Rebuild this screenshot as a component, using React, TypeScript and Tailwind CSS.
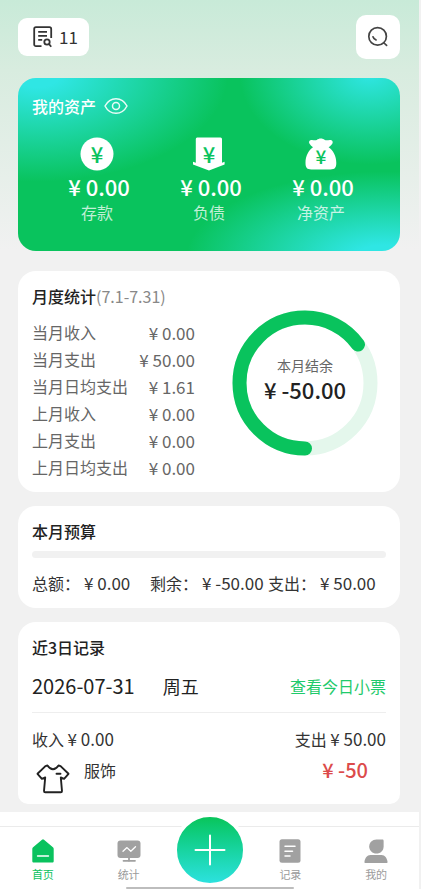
import type { ReactNode } from 'react';

type Stat = { label: string; value: string };

const MONTH_STATS: Stat[] = [
  { label: '当月收入', value: '0.00' },
  { label: '当月支出', value: '50.00' },
  { label: '当月日均支出', value: '1.61' },
  { label: '上月收入', value: '0.00' },
  { label: '上月支出', value: '0.00' },
  { label: '上月日均支出', value: '0.00' },
];

const BUDGET: Stat[] = [
  { label: '总额', value: '0.00' },
  { label: '剩余', value: '-50.00' },
  { label: '支出', value: '50.00' },
];

const BALANCE_RATIO = 0.65;

const yen = (v: string) => `¥ ${v}`;

function ReceiptIcon() {
  return (
    <svg width="20" height="22" viewBox="0 0 20 22" fill="none" stroke="#333" strokeWidth="1.8">
      <path d="M8.5 20.2H3a1.8 1.8 0 0 1-1.8-1.8V3c0-1 .8-1.8 1.8-1.8h13.400c1 0 1.800.8 1.800 1.800v9" />
      <path d="M5.200 5.800h8.800M5.200 9.800h8.800M5.200 13.800h4" />
      <circle cx="14" cy="16" r="2.7" />
      <path d="M16 18l2.200 2.800" />
    </svg>
  );
}

function SearchIcon() {
  return (
    <svg width="22" height="22" viewBox="0 0 22 22" fill="none" stroke="#444" strokeWidth="1.7" strokeLinecap="round">
      <circle cx="10.6" cy="10.4" r="8.8" />
      <path d="M17 17l2.600 2.400" />
      <path d="M6 10.800c.4 1.500 1.400 2.600 3 3.100" />
    </svg>
  );
}

function EyeIcon() {
  return (
    <svg width="24" height="18" viewBox="0 0 24 18" fill="none" stroke="#fff" strokeOpacity="0.9" strokeWidth="1.5">
      <path d="M1 9c2.400-4.600 6.300-7.300 11-7.300S20.600 4.400 23 9c-2.400 4.600-6.300 7.300-11 7.300S3.400 13.600 1 9z" strokeLinejoin="round" />
      <circle cx="12" cy="9" r="3.5" />
    </svg>
  );
}

function YenMark({ y, size }: { y: number; size: number }) {
  return (
    <text x="17" y={y} textAnchor="middle" fontSize={size} fontWeight="500" fill="#09c35d">¥</text>
  );
}

function CoinIcon() {
  return (
    <svg width="34" height="34" viewBox="0 0 34 34">
      <circle cx="17" cy="17" r="16.5" fill="#fff" />
      <YenMark y={25.6} size={22} />
    </svg>
  );
}

function BillIcon() {
  return (
    <svg width="34" height="34" viewBox="0 0 34 34" fill="#fff">
      <path d="M5.500.500h23a1.500 1.500 0 0 1 1.500 1.500v23.800l2.600-1v2.800L17 33.500 1 27.600v-2.800l2.800 1V2A1.500 1.500 0 0 1 5.500.500z" />
      <YenMark y={25.6} size={22} />
    </svg>
  );
}

function BagIcon() {
  return (
    <svg width="34" height="34" viewBox="0 0 34 34" fill="#fff">
      <path d="M12.800 3c2-2 6-2 8 0 1.200.3 3 .2 5 0 2.200-.1 3.600 1.600 2.600 3.400-.8 1.400-2.200 2.700-3.800 3.800 4.600 3 7.700 8.800 7.700 15.600 0 5-1.600 6.700-5.800 6.700H7.300c-4.200 0-5.800-1.700-5.800-6.700 0-6.800 3-12.600 7.500-15.600-1.600-1.100-2.800-2.400-3.600-3.800C4.400 4.600 5.800 2.900 8 3c1.900.2 3.600.3 4.800 0z" />
      <YenMark y={27} size={19} />
    </svg>
  );
}

function ShirtIcon() {
  return (
    <svg width="34" height="30" viewBox="0 0 34 30" fill="none" stroke="#222" strokeWidth="1.9" strokeLinejoin="round" strokeLinecap="round">
      <path d="M11.500 1.500c1.500 2.400 3.200 3.700 5.500 3.700s4-1.300 5.500-3.700c1 .2 1.800.5 2.600 1.100l7.400 7.200-4.400 5-3.300-1.300 1.200 13.500c0 .9-.3 1.300-1.200 1.300H9.200c-.9 0-1.200-.4-1.200-1.300l1.200-13.500-3.300 1.300-4.400-5 7.400-7.200c.8-.6 1.600-.9 2.600-1.100z" />
      <path d="M20.500 9.700h4" />
    </svg>
  );
}

function HomeIcon() {
  return (
    <svg width="24" height="24" viewBox="0 0 24 24">
      <path d="M11 .8a1.500 1.500 0 0 1 2 0l8.900 7.500c.6.500.8 1 .8 1.800V22c0 1-.5 1.500-1.500 1.500H2.800c-1 0-1.500-.5-1.500-1.500V10.100c0-.8.200-1.300.8-1.800L11 .8z" fill="#0ac25e" />
      <path d="M6.500 17h11" stroke="#fff" strokeWidth="1.4" strokeLinecap="round" />
    </svg>
  );
}

function ChartIcon() {
  return (
    <svg width="24" height="24" viewBox="0 0 24 24" fill="none">
      <rect x="0.5" y="1.5" width="23" height="17.5" rx="3" fill="#a1a1a1" />
      <path d="M12 19v3M6.500 21.800h11.500" stroke="#a1a1a1" strokeWidth="1.8" strokeLinecap="round" />
      <path d="M6 12.300l4-3.700 3.800 3.700L18.500 7.800" stroke="#fff" strokeWidth="1.3" strokeLinecap="round" strokeLinejoin="round" />
    </svg>
  );
}

function NoteIcon() {
  return (
    <svg width="24" height="24" viewBox="0 0 24 24">
      <rect x="1.5" y="0.3" width="21" height="23.5" rx="2.5" fill="#a1a1a1" />
      <path d="M7 7.300h10M7 12.200h7.500M7 17h5" stroke="#fff" strokeWidth="1.5" strokeLinecap="round" />
    </svg>
  );
}

function UserIcon() {
  return (
    <svg width="24" height="24" viewBox="0 0 24 24" fill="#a1a1a1">
      <path d="M12.500.500h5.700c1 0 1.400.5 1.400 1.400v5.600c0 4.200-3 7.100-7.200 7.100-4 0-7.200-3-7.200-7.100S8.400.500 12.500.500z" />
      <path d="M6.500 16h11c3.500 0 5.500 3.400 6 6.500.2 1-.2 1.500-1 1.500h-21c-.8 0-1.200-.5-1-1.500.5-3.100 2.500-6.500 6-6.500z" />
    </svg>
  );
}

function Card({ className, children }: { className: string; children: ReactNode }) {
  return <section className={`rounded-[18px] bg-white px-3.5 pt-[13px] ${className}`}>{children}</section>;
}

function Asset({ icon, label }: { icon: ReactNode; label: string }) {
  return (
    <div className="flex flex-col items-center">
      {icon}
      <span className="mt-px pl-1 text-[22px] leading-7 font-medium">{yen('0.00')}</span>
      <span className="text-base leading-6 text-white/75">{label}</span>
    </div>
  );
}

function NavItem({ icon, label, active }: { icon: ReactNode; label: string; active?: boolean }) {
  return (
    <a href="#" className={`flex flex-col items-center pt-3 text-[11px] leading-[22px] ${active ? 'text-[#0ac25e]' : 'text-[#9b9b9b]'}`}>
      {icon}
      {label}
    </a>
  );
}

export default function App() {
  return (
    <div className="min-h-screen bg-[#f1f1f1] pr-0.5 font-['Noto_Sans_CJK_SC',sans-serif] text-[#222]">
      <div className="flex min-h-screen flex-col bg-[#f1f1f1] bg-[linear-gradient(#c8ead8_0px,#d8ecdf_70px,#f1f1f1_250px)]">
        <header className="flex items-center justify-between pt-[15px] pr-[19px] pl-[18px]">
          <button className="flex h-[38px] w-[71px] items-center justify-center gap-1.5 rounded-[9px] bg-white pl-1 text-[17px] text-[#333]">
            <ReceiptIcon />
            11
          </button>
          <button aria-label="搜索" className="flex size-11 items-center justify-center rounded-[10px] bg-white">
            <SearchIcon />
          </button>
        </header>

        <main className="flex flex-col pt-[19px] pr-[19px] pb-[7px] pl-[18px]">
          <section className="rounded-[18px] bg-[#09c35d] bg-[radial-gradient(50%_62%_at_5%_-2%,#2fe6e4_12%,#2fe6e400_100%),radial-gradient(34%_52%_at_92%_-2%,#2fe6e4_0%,#2fe6e400_100%),radial-gradient(52%_50%_at_96%_104%,#2fe6e4_15%,#2fe6e400_100%)] px-3.5 pt-4 pb-[27px] text-white">
            <div className="flex items-center gap-2 text-base leading-6 font-medium">
              我的资产
              <button aria-label="显示金额"><EyeIcon /></button>
            </div>
            <div className="mt-[19px] grid grid-cols-3 px-[9px]">
              <Asset icon={<CoinIcon />} label="存款" />
              <Asset icon={<BillIcon />} label="负债" />
              <Asset icon={<BagIcon />} label="净资产" />
            </div>
          </section>

          <Card className="mt-5 flex items-center justify-between pb-[11px]">
            <div className="w-[163px]">
              <h2 className="text-base leading-6 font-medium whitespace-nowrap">
                月度统计<span className="font-normal text-[#888]">(7.1-7.31)</span>
              </h2>
              <dl className="mt-[11px] text-[#666]">
                {MONTH_STATS.map(s => (
                  <div key={s.label} className="flex justify-between leading-[27px]">
                    <dt className="text-base leading-[27px]">{s.label}</dt>
                    <dd className="text-[17px]">{yen(s.value)}</dd>
                  </div>
                ))}
              </dl>
            </div>
            <div className="mr-2 grid place-items-center">
              <svg className="col-start-1 row-start-1" width="146" height="146" viewBox="0 0 146 146" fill="none" strokeWidth="14">
                <circle cx="73" cy="73" r="65.5" stroke="#e4f7ec" />
                <circle
                  cx="73" cy="73" r="65.5" stroke="#09c35d" strokeLinecap="round"
                  pathLength={1} strokeDasharray={`${BALANCE_RATIO} 1`} transform="rotate(90 73 73)"
                />
              </svg>
              <div className="col-start-1 row-start-1 flex flex-col items-center pb-2">
                <span className="text-sm leading-5 text-[#666]">本月结余</span>
                <span className="text-[22px] leading-7 font-medium">{yen('-50.00')}</span>
              </div>
            </div>
          </Card>

          <Card className="mt-3.5 pb-[13px]">
            <h2 className="text-base leading-6 font-medium">本月预算</h2>
            <div className="mt-2 h-[7px] rounded-full bg-[#f1f1f1]" />
            <div className="mt-[13px] grid grid-cols-3 text-base leading-6 whitespace-nowrap text-[#333]">
              {BUDGET.map(b => (
                <div key={b.label} className="flex">
                  {b.label}：<span className="pl-1 text-[17px]">{yen(b.value)}</span>
                </div>
              ))}
            </div>
          </Card>

          <Card className="mt-3.5 rounded-b-[10px] pb-2.5">
            <h2 className="text-base leading-6 font-medium">近3日记录</h2>
            <div className="mt-[13px] flex items-center border-b border-[#eee] pb-3 leading-7">
              <span className="text-xl leading-7">2026-07-31</span>
              <span className="ml-7 text-lg leading-7">周五</span>
              <a href="#" className="ml-auto text-base leading-7 text-[#1fca6c]">查看今日小票</a>
            </div>
            <div className="mt-3.5 flex justify-between text-base leading-6 text-[#333]">
              <span>收入 <span className="text-[17px]">{yen('0.00')}</span></span>
              <span>支出 <span className="text-[17px]">{yen('50.00')}</span></span>
            </div>
            <div className="mt-[7px] flex items-start pr-[18px] pl-1 leading-6">
              <span className="pt-1.5"><ShirtIcon /></span>
              <span className="ml-3.5 text-base leading-6 text-[#333]">服饰</span>
              <span className="ml-auto text-xl leading-6 font-medium text-[#dc4b4b]">{yen('-50')}</span>
            </div>
          </Card>
        </main>

        <nav className="relative mt-auto bg-white pt-3.5">
          <div className="grid h-[63px] grid-cols-[1fr_1fr_76px_1fr_1fr] border-t border-[#ebebeb]">
            <NavItem icon={<HomeIcon />} label="首页" active />
            <NavItem icon={<ChartIcon />} label="统计" />
            <button aria-label="记一笔" className="z-10 -mt-3.5 flex size-[74px] items-center justify-center justify-self-center rounded-full border-4 border-white bg-linear-to-b from-[#09c34f] to-[#2fe3e6] bg-origin-border">
              <svg width="32" height="32" viewBox="0 0 32 32" stroke="#fff" strokeWidth="2" strokeLinecap="round">
                <path d="M1.500 16h29M16 1.500v29" />
              </svg>
            </button>
            <NavItem icon={<NoteIcon />} label="记录" />
            <NavItem icon={<UserIcon />} label="我的" />
          </div>
          <div className="absolute inset-x-0 bottom-0 z-20 mx-auto h-0.5 w-[168px] rounded-full bg-[#bdbdbd]" />
        </nav>
      </div>
    </div>
  );
}
